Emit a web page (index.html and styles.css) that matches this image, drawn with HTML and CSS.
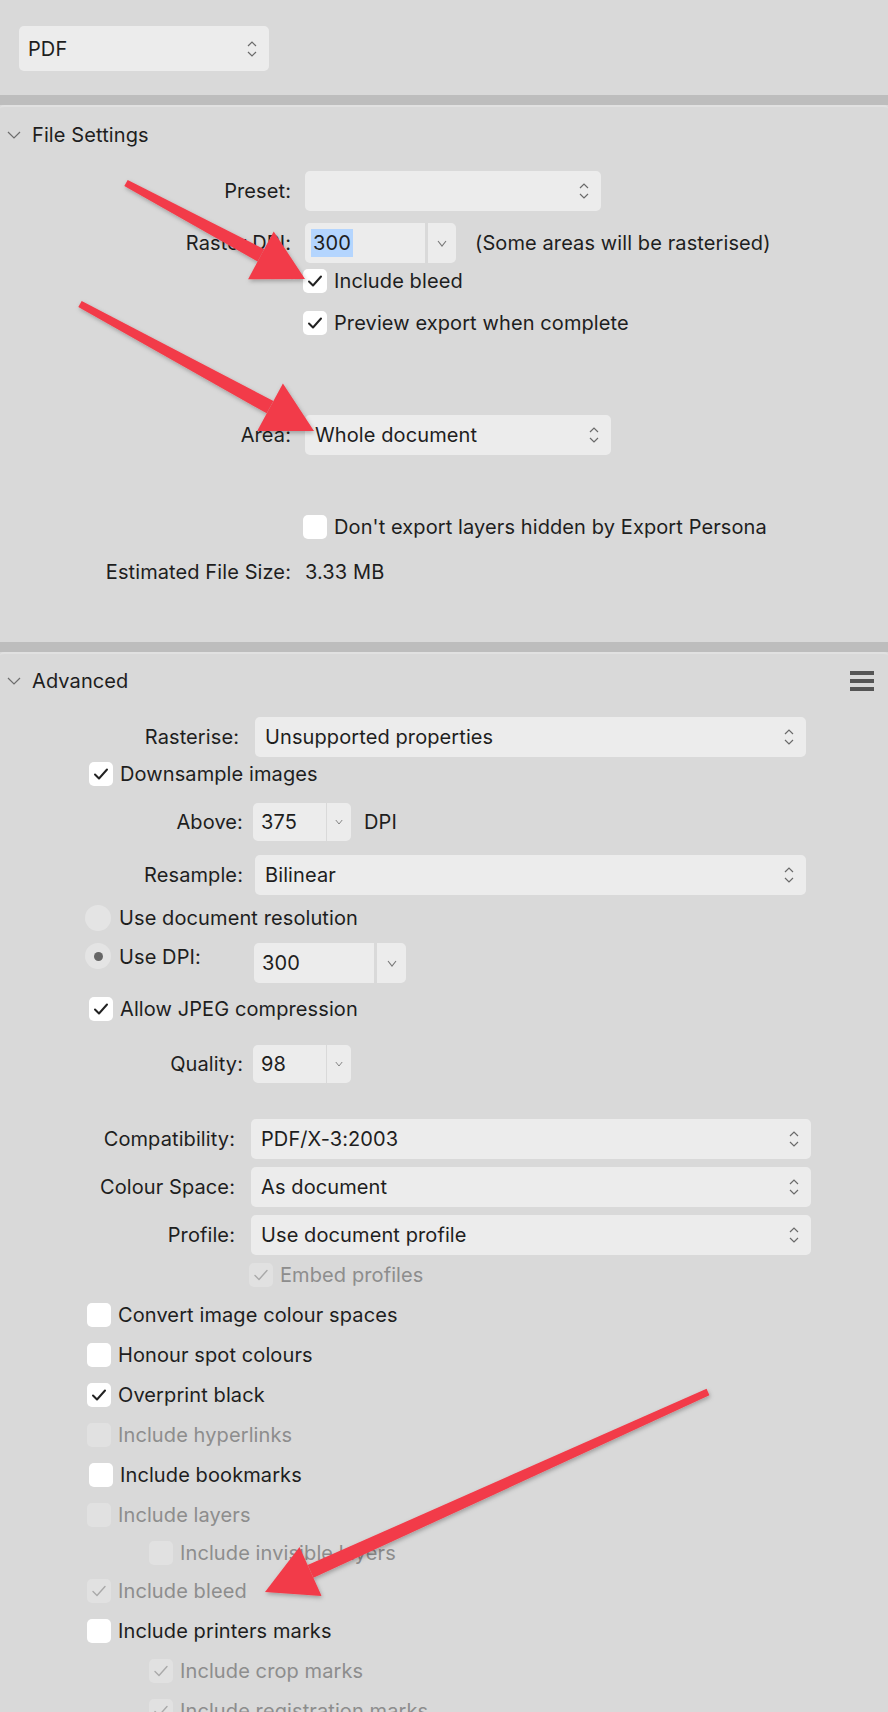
FILE: index.html
```html
<!DOCTYPE html>
<html>
<head>
<meta charset="utf-8">
<link rel="stylesheet" href="styles.css">
</head>
<body>
<div class="page">
  <div class="top">
    <div class="select w250 h45"><span>PDF</span>
      <svg class="ud" width="10" height="18" viewBox="0 0 10 18"><path d="M1 6 L5 2 L9 6 M1 12 L5 16 L9 12"/></svg>
    </div>
  </div>
  <div class="band"></div>

  <section class="panel fs">
    <div class="phead">
      <div class="ptitle"><svg class="chev" width="14" height="8" viewBox="0 0 14 8"><path d="M1 1 L7 7 L13 1"/></svg><span>File Settings</span></div>
    </div>

    <div class="row mt8">
      <div class="lbl lw291">Preset:</div>
      <div class="select w296 h40"><span></span>
        <svg class="ud" width="10" height="18" viewBox="0 0 10 18"><path d="M1 6 L5 2 L9 6 M1 12 L5 16 L9 12"/></svg>
      </div>
    </div>

    <div class="row mt12">
      <div class="lbl lw291">Raster DPI:</div>
      <div class="combo h40">
        <div class="cin w120"><span class="sel">300</span></div>
        <div class="cdd w28"><svg width="10" height="7" viewBox="0 0 10 7"><path d="M1 1 L5 6 L9 1"/></svg></div>
      </div>
      <div class="note">(Some areas will be rasterised)</div>
    </div>

    <div class="check mt6 ind303">
      <div class="cb"><svg width="24" height="24" viewBox="0 0 24 24"><path d="M6 12.5 L10 16.5 L18 7.5"/></svg></div>
      <span>Include bleed</span>
    </div>
    <div class="check mt18 ind303">
      <div class="cb"><svg width="24" height="24" viewBox="0 0 24 24"><path d="M6 12.5 L10 16.5 L18 7.5"/></svg></div>
      <span>Preview export when complete</span>
    </div>

    <div class="row mt80">
      <div class="lbl lw291">Area:</div>
      <div class="select w306 h40"><span>Whole document</span>
        <svg class="ud" width="10" height="18" viewBox="0 0 10 18"><path d="M1 6 L5 2 L9 6 M1 12 L5 16 L9 12"/></svg>
      </div>
    </div>

    <div class="check mt60 ind303">
      <div class="cb"></div>
      <span>Don't export layers hidden by Export Persona</span>
    </div>

    <div class="row mt21 h24">
      <div class="lbl lw291">Estimated File Size:</div>
      <div class="val">3.33 MB</div>
    </div>
  </section>

  <div class="band"></div>

  <section class="panel adv">
    <div class="phead">
      <div class="ptitle"><svg class="chev" width="14" height="8" viewBox="0 0 14 8"><path d="M1 1 L7 7 L13 1"/></svg><span>Advanced</span></div>
      <div class="burger"><i></i><i></i><i></i></div>
    </div>

    <div class="row mt9">
      <div class="lbl lw239">Rasterise:</div>
      <div class="select w551 h40"><span>Unsupported properties</span>
        <svg class="ud" width="10" height="18" viewBox="0 0 10 18"><path d="M1 6 L5 2 L9 6 M1 12 L5 16 L9 12"/></svg>
      </div>
    </div>

    <div class="check mt5 ind89">
      <div class="cb"><svg width="24" height="24" viewBox="0 0 24 24"><path d="M6 12.5 L10 16.5 L18 7.5"/></svg></div>
      <span>Downsample images</span>
    </div>

    <div class="row mt17">
      <div class="lbl lw243 tight">Above:</div>
      <div class="combo h38 thin">
        <div class="cin w73"><span>375</span></div>
        <div class="cdd w24"><svg width="8" height="6" viewBox="0 0 10 7"><path d="M1 1 L5 6 L9 1"/></svg></div>
      </div>
      <div class="unit">DPI</div>
    </div>

    <div class="row mt14">
      <div class="lbl lw243 wide">Resample:</div>
      <div class="select w551 h40"><span>Bilinear</span>
        <svg class="ud" width="10" height="18" viewBox="0 0 10 18"><path d="M1 6 L5 2 L9 6 M1 12 L5 16 L9 12"/></svg>
      </div>
    </div>

    <div class="radio-row mt10 ind85">
      <div class="rb"></div>
      <span>Use document resolution</span>
    </div>

    <div class="radio-row dpi mt12 ind85">
      <div class="rb on"><i></i></div>
      <span class="dpilbl">Use DPI:</span>
      <div class="combo h40">
        <div class="cin w120"><span>300</span></div>
        <div class="cdd w29"><svg width="10" height="7" viewBox="0 0 10 7"><path d="M1 1 L5 6 L9 1"/></svg></div>
      </div>
    </div>

    <div class="check mt14 ind89">
      <div class="cb"><svg width="24" height="24" viewBox="0 0 24 24"><path d="M6 12.5 L10 16.5 L18 7.5"/></svg></div>
      <span>Allow JPEG compression</span>
    </div>

    <div class="row mt24">
      <div class="lbl lw243 tight">Quality:</div>
      <div class="combo h38 thin">
        <div class="cin w73"><span>98</span></div>
        <div class="cdd w24"><svg width="8" height="6" viewBox="0 0 10 7"><path d="M1 1 L5 6 L9 1"/></svg></div>
      </div>
    </div>

    <div class="row mt36">
      <div class="lbl lw235">Compatibility:</div>
      <div class="select w560 h40"><span>PDF/X-3:2003</span>
        <svg class="ud" width="10" height="18" viewBox="0 0 10 18"><path d="M1 6 L5 2 L9 6 M1 12 L5 16 L9 12"/></svg>
      </div>
    </div>
    <div class="row mt8">
      <div class="lbl lw235">Colour Space:</div>
      <div class="select w560 h40"><span>As document</span>
        <svg class="ud" width="10" height="18" viewBox="0 0 10 18"><path d="M1 6 L5 2 L9 6 M1 12 L5 16 L9 12"/></svg>
      </div>
    </div>
    <div class="row mt8">
      <div class="lbl lw235">Profile:</div>
      <div class="select w560 h40"><span>Use document profile</span>
        <svg class="ud" width="10" height="18" viewBox="0 0 10 18"><path d="M1 6 L5 2 L9 6 M1 12 L5 16 L9 12"/></svg>
      </div>
    </div>

    <div class="check dis mt8 ind249">
      <div class="cb"><svg width="24" height="24" viewBox="0 0 24 24"><path d="M6 12.5 L10 16.5 L18 7.5"/></svg></div>
      <span>Embed profiles</span>
    </div>

    <div class="check mt16 ind87">
      <div class="cb"></div>
      <span>Convert image colour spaces</span>
    </div>
    <div class="check mt16 ind87">
      <div class="cb"></div>
      <span>Honour spot colours</span>
    </div>
    <div class="check mt16 ind87">
      <div class="cb"><svg width="24" height="24" viewBox="0 0 24 24"><path d="M6 12.5 L10 16.5 L18 7.5"/></svg></div>
      <span>Overprint black</span>
    </div>
    <div class="check dis mt16 ind87">
      <div class="cb"></div>
      <span>Include hyperlinks</span>
    </div>
    <div class="check mt16 ind89">
      <div class="cb"></div>
      <span>Include bookmarks</span>
    </div>
    <div class="check dis mt16 ind87">
      <div class="cb"></div>
      <span>Include layers</span>
    </div>
    <div class="check dis mt14 ind149">
      <div class="cb"></div>
      <span>Include invisible layers</span>
    </div>
    <div class="check dis mt14 ind87">
      <div class="cb"><svg width="24" height="24" viewBox="0 0 24 24"><path d="M6 12.5 L10 16.5 L18 7.5"/></svg></div>
      <span>Include bleed</span>
    </div>
    <div class="check mt16 ind87">
      <div class="cb"></div>
      <span>Include printers marks</span>
    </div>
    <div class="check dis mt16 ind149">
      <div class="cb"><svg width="24" height="24" viewBox="0 0 24 24"><path d="M6 12.5 L10 16.5 L18 7.5"/></svg></div>
      <span>Include crop marks</span>
    </div>
    <div class="check dis mt16 ind149">
      <div class="cb"><svg width="24" height="24" viewBox="0 0 24 24"><path d="M6 12.5 L10 16.5 L18 7.5"/></svg></div>
      <span>Include registration marks</span>
    </div>
  </section>

  <svg class="arrows" width="888" height="1712" viewBox="0 0 888 1712">
    <defs>
      <filter id="sh" x="-20%" y="-20%" width="140%" height="140%">
        <feDropShadow dx="1" dy="2" stdDeviation="2" flood-color="#000" flood-opacity="0.28"/>
      </filter>
    </defs>
    <g fill="#f23b48" filter="url(#sh)">
      <polygon points="124.3,186.1 127.7,179.9 264.2,249.2 257.6,261.5"/>
      <polygon points="305,279 248.1,279.2 273.7,231.5"/>
      <polygon points="78.3,307.1 81.7,300.9 273.4,401 266.7,413.3"/>
      <polygon points="314,431 257.2,430.9 282.9,383.4"/>
      <polygon points="709.4,1395.2 706.6,1388.8 307.7,1565.1 313.4,1577.8"/>
      <polygon points="265,1592 321.6,1596 299.5,1546.9"/>
    </g>
  </svg>
</div>
</body>
</html>
```

FILE: styles.css
```css
* { box-sizing: border-box; }
html, body { margin: 0; padding: 0; }
body {
  background: #d9d9d9;
  font-family: Inter, "Noto Sans", "Liberation Sans", sans-serif;
  font-size: 20px;
  color: #1e1e1e;
  letter-spacing: 0.1px;
}
.page { position: relative; width: 888px; height: 1712px; overflow: hidden; }

.top { height: 95px; padding: 26px 0 0 19px; }
.band { height: 10px; background: #bdbdbd; }

.panel {
  background: #d9d9d9;
  border-top: 2px solid #e1e1e1;
  border-radius: 4px 4px 0 0;
}
.fs { height: 537px; }

.phead {
  height: 56px;
  display: flex;
  align-items: center;
  justify-content: space-between;
  padding-right: 14px;
}
.adv .phead { height: 54px; }
.ptitle { display: flex; align-items: center; }
.chev { margin: 0 11px 0 7px; fill: none; stroke: #6d6d6d; stroke-width: 1.2; }
.ptitle span { font-size: 20px; }

.burger { display: flex; flex-direction: column; gap: 4px; }
.burger i { display: block; width: 24px; height: 4px; background: #555; }

.row { display: flex; align-items: center; }
.h24 { height: 24px; }
.lbl { flex: none; text-align: right; }
.lw291 { width: 291px; margin-right: 14px; }
.lw239 { width: 239px; margin-right: 16px; }
.lw243 { width: 243px; }
.lw243.tight { margin-right: 10px; }
.lw243.wide { margin-right: 12px; }
.lw235 { width: 235px; margin-right: 16px; }

.select {
  position: relative;
  display: flex;
  align-items: center;
  justify-content: space-between;
  background: #ececec;
  border-radius: 5px;
  padding: 0 12px 0 10px;
}
.top .select { padding-left: 9px; }
.ud { fill: none; stroke: #6a6a6a; stroke-width: 1.2; flex: none; }
.w250 { width: 250px; }
.w296 { width: 296px; }
.w306 { width: 306px; }
.w551 { width: 551px; }
.w560 { width: 560px; }
.h45 { height: 45px; }
.h40 { height: 40px; }
.h38 { height: 38px; }

.combo { display: flex; gap: 3px; }
.combo.thin { gap: 1px; }
.cin {
  display: flex;
  align-items: center;
  background: #ececec;
  border-radius: 5px 0 0 5px;
  padding-left: 8px;
}
.cin .sel { background: #b4d5fe; padding: 2px; margin-left: -2px; }
.cdd {
  display: flex;
  align-items: center;
  justify-content: center;
  background: #ececec;
  border-radius: 0 5px 5px 0;
}
.cdd svg { fill: none; stroke: #777; stroke-width: 1.1; }
.w120 { width: 120px; }
.w73 { width: 73px; }
.w24 { width: 24px; }
.w28 { width: 28px; }
.w29 { width: 29px; }

.note { margin-left: 19px; }
.unit { margin-left: 13px; }

.check { display: flex; align-items: center; height: 24px; gap: 7px; }
.cb {
  flex: none;
  width: 24px;
  height: 24px;
  border-radius: 5px;
  background: #fff;
  display: flex;
  align-items: center;
  justify-content: center;
}
.cb svg { fill: none; stroke: #222; stroke-width: 2; stroke-linecap: round; stroke-linejoin: round; }
.check.dis .cb { background: #e1e1e1; }
.check.dis .cb svg { stroke: #a9a9a9; stroke-width: 1.4; }
.check.dis span { color: #8d8d8d; }

.radio-row { display: flex; align-items: center; height: 26px; gap: 8px; }
.radio-row.dpi { align-items: flex-start; height: 40px; }
.rb {
  flex: none;
  width: 26px;
  height: 26px;
  border-radius: 50%;
  background: #e4e4e4;
  display: flex;
  align-items: center;
  justify-content: center;
}
.rb i { width: 9px; height: 9px; border-radius: 50%; background: #666; }
.dpilbl { width: 127px; line-height: 28px; }

.ind303 { margin-left: 303px; }
.ind89 { margin-left: 89px; }
.ind87 { margin-left: 87px; }
.ind85 { margin-left: 85px; }
.ind149 { margin-left: 149px; }
.ind249 { margin-left: 249px; }

.mt5 { margin-top: 5px; }
.mt6 { margin-top: 6px; }
.mt8 { margin-top: 8px; }
.mt9 { margin-top: 9px; }
.mt10 { margin-top: 10px; }
.mt12 { margin-top: 12px; }
.mt14 { margin-top: 14px; }
.mt16 { margin-top: 16px; }
.mt17 { margin-top: 17px; }
.mt18 { margin-top: 18px; }
.mt21 { margin-top: 21px; }
.mt24 { margin-top: 24px; }
.mt36 { margin-top: 36px; }
.mt60 { margin-top: 60px; }
.mt80 { margin-top: 80px; }

.arrows { position: absolute; left: 0; top: 0; pointer-events: none; }
```
